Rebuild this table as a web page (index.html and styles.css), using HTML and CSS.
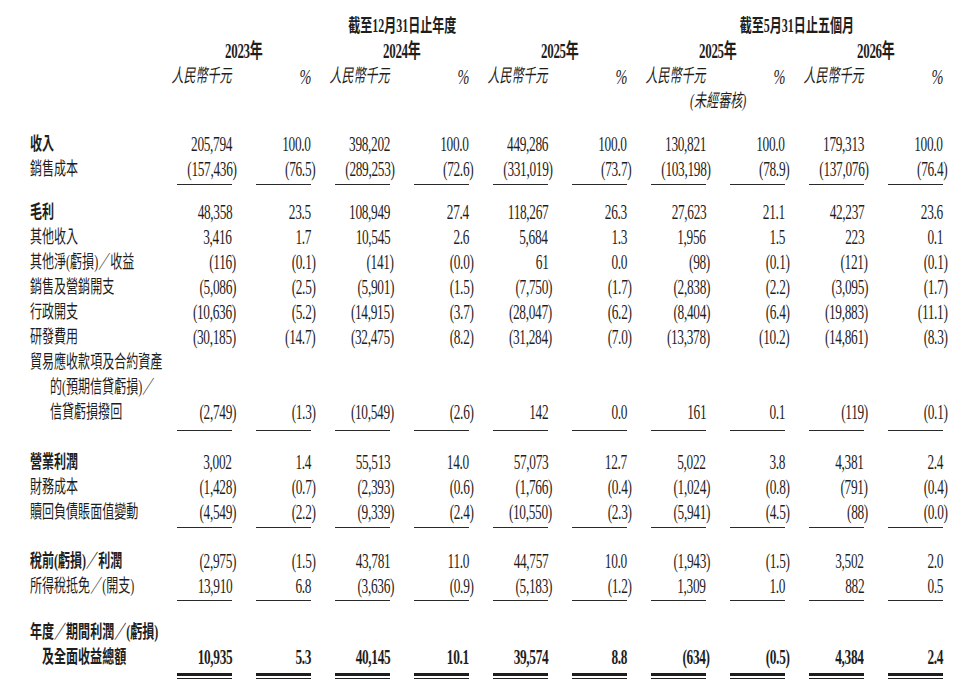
FILE: index.html
```html
<!DOCTYPE html>
<html lang="zh-Hant">
<head>
<meta charset="utf-8">
<title>綜合損益表</title>
<link rel="stylesheet" href="styles.css">
</head>
<body>
<div class="page">
  <div class="hdr">
    <div class="row">
      <div></div>
      <div class="grp6 b"><span>截至12月31日止年度</span></div>
      <div class="grp4 b"><span>截至5月31日止五個月</span></div>
    </div>
    <div class="row">
      <div></div>
      <div class="grp2 b"><span>2023年</span></div>
      <div class="grp2 b"><span>2024年</span></div>
      <div class="grp2 b"><span>2025年</span></div>
      <div class="grp2 b"><span>2025年</span></div>
      <div class="grp2 b"><span>2026年</span></div>
    </div>
    <div class="row">
      <div></div>
      <div class="cur"><span>人民幣千元</span></div><div class="pct"><span>%</span></div>
      <div class="cur"><span>人民幣千元</span></div><div class="pct"><span>%</span></div>
      <div class="cur"><span>人民幣千元</span></div><div class="pct"><span>%</span></div>
      <div class="cur"><span>人民幣千元</span></div><div class="pct"><span>%</span></div>
      <div class="cur"><span>人民幣千元</span></div><div class="pct"><span>%</span></div>
    </div>
    <div class="row">
      <div></div>
      <div class="unaud"><span>(未經審核)</span></div>
    </div>
  </div>

  <div class="sec sec-a">
    <div class="row">
      <div class="lbl b"><span>收入</span></div>
      <div class="n"><span>205,794</span></div><div class="n"><span>100.0</span></div>
      <div class="n"><span>398,202</span></div><div class="n"><span>100.0</span></div>
      <div class="n"><span>449,286</span></div><div class="n"><span>100.0</span></div>
      <div class="n"><span>130,821</span></div><div class="n"><span>100.0</span></div>
      <div class="n"><span>179,313</span></div><div class="n"><span>100.0</span></div>
    </div>
    <div class="row">
      <div class="lbl"><span>銷售成本</span></div>
      <div class="n"><span>(157,436<b class="cp">)</b></span></div><div class="n"><span>(76.5<b class="cp">)</b></span></div>
      <div class="n"><span>(289,253<b class="cp">)</b></span></div><div class="n"><span>(72.6<b class="cp">)</b></span></div>
      <div class="n"><span>(331,019<b class="cp">)</b></span></div><div class="n"><span>(73.7<b class="cp">)</b></span></div>
      <div class="n"><span>(103,198<b class="cp">)</b></span></div><div class="n"><span>(78.9<b class="cp">)</b></span></div>
      <div class="n"><span>(137,076<b class="cp">)</b></span></div><div class="n"><span>(76.4<b class="cp">)</b></span></div>
    </div>
  </div>
  <div class="rule rule-a"><div></div><i></i><i></i><i></i><i></i><i></i><i></i><i></i><i></i><i></i><i></i></div>

  <div class="sec sec-b">
    <div class="row">
      <div class="lbl b"><span>毛利</span></div>
      <div class="n"><span>48,358</span></div><div class="n"><span>23.5</span></div>
      <div class="n"><span>108,949</span></div><div class="n"><span>27.4</span></div>
      <div class="n"><span>118,267</span></div><div class="n"><span>26.3</span></div>
      <div class="n"><span>27,623</span></div><div class="n"><span>21.1</span></div>
      <div class="n"><span>42,237</span></div><div class="n"><span>23.6</span></div>
    </div>
    <div class="row">
      <div class="lbl"><span>其他收入</span></div>
      <div class="n"><span>3,416</span></div><div class="n"><span>1.7</span></div>
      <div class="n"><span>10,545</span></div><div class="n"><span>2.6</span></div>
      <div class="n"><span>5,684</span></div><div class="n"><span>1.3</span></div>
      <div class="n"><span>1,956</span></div><div class="n"><span>1.5</span></div>
      <div class="n"><span>223</span></div><div class="n"><span>0.1</span></div>
    </div>
    <div class="row">
      <div class="lbl"><span>其他淨(虧損)／收益</span></div>
      <div class="n"><span>(116<b class="cp">)</b></span></div><div class="n"><span>(0.1<b class="cp">)</b></span></div>
      <div class="n"><span>(141<b class="cp">)</b></span></div><div class="n"><span>(0.0<b class="cp">)</b></span></div>
      <div class="n"><span>61</span></div><div class="n"><span>0.0</span></div>
      <div class="n"><span>(98<b class="cp">)</b></span></div><div class="n"><span>(0.1<b class="cp">)</b></span></div>
      <div class="n"><span>(121<b class="cp">)</b></span></div><div class="n"><span>(0.1<b class="cp">)</b></span></div>
    </div>
    <div class="row">
      <div class="lbl"><span>銷售及營銷開支</span></div>
      <div class="n"><span>(5,086<b class="cp">)</b></span></div><div class="n"><span>(2.5<b class="cp">)</b></span></div>
      <div class="n"><span>(5,901<b class="cp">)</b></span></div><div class="n"><span>(1.5<b class="cp">)</b></span></div>
      <div class="n"><span>(7,750<b class="cp">)</b></span></div><div class="n"><span>(1.7<b class="cp">)</b></span></div>
      <div class="n"><span>(2,838<b class="cp">)</b></span></div><div class="n"><span>(2.2<b class="cp">)</b></span></div>
      <div class="n"><span>(3,095<b class="cp">)</b></span></div><div class="n"><span>(1.7<b class="cp">)</b></span></div>
    </div>
    <div class="row">
      <div class="lbl"><span>行政開支</span></div>
      <div class="n"><span>(10,636<b class="cp">)</b></span></div><div class="n"><span>(5.2<b class="cp">)</b></span></div>
      <div class="n"><span>(14,915<b class="cp">)</b></span></div><div class="n"><span>(3.7<b class="cp">)</b></span></div>
      <div class="n"><span>(28,047<b class="cp">)</b></span></div><div class="n"><span>(6.2<b class="cp">)</b></span></div>
      <div class="n"><span>(8,404<b class="cp">)</b></span></div><div class="n"><span>(6.4<b class="cp">)</b></span></div>
      <div class="n"><span>(19,883<b class="cp">)</b></span></div><div class="n"><span>(11.1<b class="cp">)</b></span></div>
    </div>
    <div class="row">
      <div class="lbl"><span>研發費用</span></div>
      <div class="n"><span>(30,185<b class="cp">)</b></span></div><div class="n"><span>(14.7<b class="cp">)</b></span></div>
      <div class="n"><span>(32,475<b class="cp">)</b></span></div><div class="n"><span>(8.2<b class="cp">)</b></span></div>
      <div class="n"><span>(31,284<b class="cp">)</b></span></div><div class="n"><span>(7.0<b class="cp">)</b></span></div>
      <div class="n"><span>(13,378<b class="cp">)</b></span></div><div class="n"><span>(10.2<b class="cp">)</b></span></div>
      <div class="n"><span>(14,861<b class="cp">)</b></span></div><div class="n"><span>(8.3<b class="cp">)</b></span></div>
    </div>
    <div class="row">
      <div class="lbl"><span>貿易應收款項及合約資產</span></div>
    </div>
    <div class="row">
      <div class="lbl ind2"><span>的(預期信貸虧損)／</span></div>
    </div>
    <div class="row">
      <div class="lbl ind2"><span>信貸虧損撥回</span></div>
      <div class="n"><span>(2,749<b class="cp">)</b></span></div><div class="n"><span>(1.3<b class="cp">)</b></span></div>
      <div class="n"><span>(10,549<b class="cp">)</b></span></div><div class="n"><span>(2.6<b class="cp">)</b></span></div>
      <div class="n"><span>142</span></div><div class="n"><span>0.0</span></div>
      <div class="n"><span>161</span></div><div class="n"><span>0.1</span></div>
      <div class="n"><span>(119<b class="cp">)</b></span></div><div class="n"><span>(0.1<b class="cp">)</b></span></div>
    </div>
  </div>
  <div class="rule rule-b"><div></div><i></i><i></i><i></i><i></i><i></i><i></i><i></i><i></i><i></i><i></i></div>

  <div class="sec sec-c">
    <div class="row">
      <div class="lbl b"><span>營業利潤</span></div>
      <div class="n"><span>3,002</span></div><div class="n"><span>1.4</span></div>
      <div class="n"><span>55,513</span></div><div class="n"><span>14.0</span></div>
      <div class="n"><span>57,073</span></div><div class="n"><span>12.7</span></div>
      <div class="n"><span>5,022</span></div><div class="n"><span>3.8</span></div>
      <div class="n"><span>4,381</span></div><div class="n"><span>2.4</span></div>
    </div>
    <div class="row">
      <div class="lbl"><span>財務成本</span></div>
      <div class="n"><span>(1,428<b class="cp">)</b></span></div><div class="n"><span>(0.7<b class="cp">)</b></span></div>
      <div class="n"><span>(2,393<b class="cp">)</b></span></div><div class="n"><span>(0.6<b class="cp">)</b></span></div>
      <div class="n"><span>(1,766<b class="cp">)</b></span></div><div class="n"><span>(0.4<b class="cp">)</b></span></div>
      <div class="n"><span>(1,024<b class="cp">)</b></span></div><div class="n"><span>(0.8<b class="cp">)</b></span></div>
      <div class="n"><span>(791<b class="cp">)</b></span></div><div class="n"><span>(0.4<b class="cp">)</b></span></div>
    </div>
    <div class="row">
      <div class="lbl"><span>贖回負債賬面值變動</span></div>
      <div class="n"><span>(4,549<b class="cp">)</b></span></div><div class="n"><span>(2.2<b class="cp">)</b></span></div>
      <div class="n"><span>(9,339<b class="cp">)</b></span></div><div class="n"><span>(2.4<b class="cp">)</b></span></div>
      <div class="n"><span>(10,550<b class="cp">)</b></span></div><div class="n"><span>(2.3<b class="cp">)</b></span></div>
      <div class="n"><span>(5,941<b class="cp">)</b></span></div><div class="n"><span>(4.5<b class="cp">)</b></span></div>
      <div class="n"><span>(88<b class="cp">)</b></span></div><div class="n"><span>(0.0<b class="cp">)</b></span></div>
    </div>
  </div>
  <div class="rule rule-c"><div></div><i></i><i></i><i></i><i></i><i></i><i></i><i></i><i></i><i></i><i></i></div>

  <div class="sec sec-d">
    <div class="row">
      <div class="lbl b"><span>稅前(虧損)／利潤</span></div>
      <div class="n"><span>(2,975<b class="cp">)</b></span></div><div class="n"><span>(1.5<b class="cp">)</b></span></div>
      <div class="n"><span>43,781</span></div><div class="n"><span>11.0</span></div>
      <div class="n"><span>44,757</span></div><div class="n"><span>10.0</span></div>
      <div class="n"><span>(1,943<b class="cp">)</b></span></div><div class="n"><span>(1.5<b class="cp">)</b></span></div>
      <div class="n"><span>3,502</span></div><div class="n"><span>2.0</span></div>
    </div>
    <div class="row">
      <div class="lbl"><span>所得稅抵免／(開支)</span></div>
      <div class="n"><span>13,910</span></div><div class="n"><span>6.8</span></div>
      <div class="n"><span>(3,636<b class="cp">)</b></span></div><div class="n"><span>(0.9<b class="cp">)</b></span></div>
      <div class="n"><span>(5,183<b class="cp">)</b></span></div><div class="n"><span>(1.2<b class="cp">)</b></span></div>
      <div class="n"><span>1,309</span></div><div class="n"><span>1.0</span></div>
      <div class="n"><span>882</span></div><div class="n"><span>0.5</span></div>
    </div>
  </div>
  <div class="rule rule-d"><div></div><i></i><i></i><i></i><i></i><i></i><i></i><i></i><i></i><i></i><i></i></div>

  <div class="sec sec-e">
    <div class="row">
      <div class="lbl b"><span>年度／期間利潤／(虧損)</span></div>
    </div>
    <div class="row total">
      <div class="lbl b ind1"><span>及全面收益總額</span></div>
      <div class="n"><span>10,935</span></div><div class="n"><span>5.3</span></div>
      <div class="n"><span>40,145</span></div><div class="n"><span>10.1</span></div>
      <div class="n"><span>39,574</span></div><div class="n"><span>8.8</span></div>
      <div class="n"><span>(634<b class="cp">)</b></span></div><div class="n"><span>(0.5<b class="cp">)</b></span></div>
      <div class="n"><span>4,384</span></div><div class="n"><span>2.4</span></div>
    </div>
  </div>
  <div class="rule dbl"><div></div><i></i><i></i><i></i><i></i><i></i><i></i><i></i><i></i><i></i><i></i></div>
</div>
</body>
</html>
```

FILE: styles.css
```css
html, body {
  margin: 0;
  padding: 0;
  background: #ffffff;
}

.page {
  width: 965px;
  box-sizing: border-box;
  padding: 14px 0 0 30px;
  color: #1e1e1e;
  font-family: "Liberation Serif", "Noto Sans CJK TC", serif;
}

.row,
.rule {
  display: grid;
  grid-template-columns: 123px repeat(10, 79px);
}

.row {
  height: 25px;
  line-height: 25px;
  white-space: nowrap;
}

/* every text cell: flex box, text condensed like the printed face */
.row > div {
  display: flex;
  align-items: center;
  height: 25px;
}

.row > div > span {
  display: inline-block;
  transform: scaleX(0.65);
}

.b {
  font-weight: bold;
}

/* header */
.hdr .row {
  font-size: 18.5px;
}

.grp6,
.grp4,
.grp2,
.unaud {
  justify-content: center;
  padding-left: 24px;
}

.grp6 { grid-column: 2 / span 6; }
.grp4 { grid-column: 8 / span 4; }
.grp2 { grid-column: span 2; }
.unaud { grid-column: 8 / span 2; }

.grp6 > span,
.grp4 > span,
.grp2 > span,
.unaud > span {
  transform-origin: 50% 50%;
}

.grp2 > span {
  font-size: 20px;
  letter-spacing: -0.5px;
}

.cur,
.pct {
  justify-content: flex-end;
}

.cur > span,
.pct > span,
.n > span {
  transform-origin: 100% 50%;
}

.cur > span {
  font-style: italic;
  font-size: 18.5px;
  transform: scaleX(0.65) skewX(-4deg);
}

.pct > span {
  font-style: italic;
  font-size: 22px;
}

.unaud > span {
  font-style: italic;
  font-size: 18.5px;
  transform: scaleX(0.65) skewX(-4deg);
}

/* body */
.lbl {
  justify-content: flex-start;
  font-size: 18.5px;
}

.lbl > span {
  transform-origin: 0 50%;
}

.ind1 { padding-left: 12px; }
.ind2 { padding-left: 20px; }

.n {
  justify-content: flex-end;
  font-size: 20.5px;
  letter-spacing: -0.5px;
}

.cp {
  font-weight: inherit;
  margin-right: -6.3px;
}

.n .cp {
  font-weight: normal;
}

.total .n {
  font-weight: bold;
}

.total .n .cp {
  font-weight: bold;
}

/* section spacing */
.sec-a { margin-top: 18px; }
.sec-b { margin-top: 15px; }
.sec-c { margin-top: 19px; }
.sec-d { margin-top: 21px; }
.sec-e { margin-top: 19px; }

.rule-a { margin-top: 2px; }
.rule-b { margin-top: 5px; }
.rule-c { margin-top: 2px; }
.rule-d { margin-top: 1px; }

.rule {
  height: 1px;
}

.rule i {
  justify-self: end;
  width: 55px;
  border-top: 1px solid #2a2a2a;
}

.rule.dbl {
  height: 6px;
  margin-top: 3px;
}

.rule.dbl i {
  height: 2px;
  border-top: 3px solid #1e1e1e;
  border-bottom: 1px solid #1e1e1e;
}
```
